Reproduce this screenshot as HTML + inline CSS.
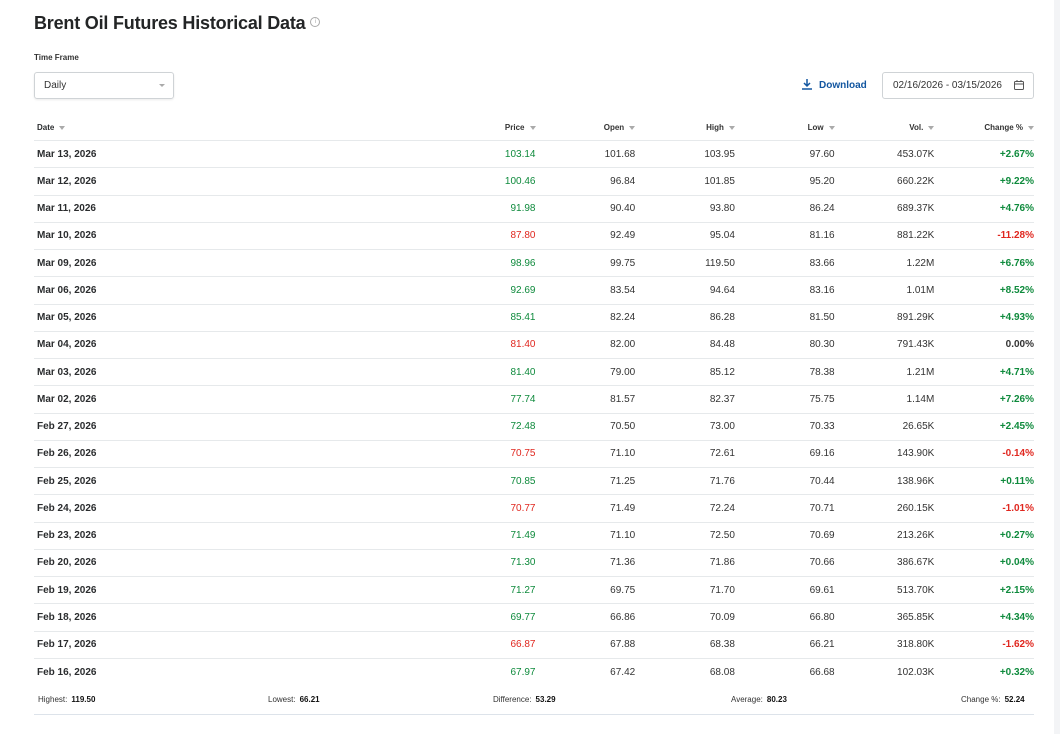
<!DOCTYPE html>
<html><head><meta charset="utf-8"><style>
body{margin:0;background:#fff;font-family:"Liberation Sans",Arial,sans-serif;color:#232526;width:1060px;height:734px;overflow:hidden;position:relative}
.abs{position:absolute}
h1{position:absolute;left:34px;top:13px;margin:0;font-size:18px;font-weight:bold;color:#232526;letter-spacing:-0.2px}
.info{display:inline-block;width:8px;height:8px;border:1px solid #aaa;border-radius:50%;font-size:6px;color:#aaa;text-align:center;line-height:8px;vertical-align:top;margin-left:5px;margin-top:4px;font-weight:normal}
.tf{left:34px;top:53px;font-size:8px;font-weight:bold;color:#333}
.sel{left:34px;top:72px;width:138px;height:25px;border:1px solid #cfd3d6;border-radius:3px;box-shadow:0 1px 2px rgba(0,0,0,.08)}
.sel span{position:absolute;left:9px;top:7px;font-size:10px;color:#333}
.sel i{position:absolute;right:8px;top:11px;border-left:3px solid transparent;border-right:3px solid transparent;border-top:3px solid #aaa}
.dl{left:801px;top:78px;font-size:10px;font-weight:bold;color:#1256a0}
.date{left:882px;top:72px;width:150px;height:25px;border:1px solid #cfd3d6;border-radius:3px;font-size:10px;color:#333}
.rows{position:absolute;left:34px;top:115px;width:1000px}
.r{display:flex;height:27.26px;align-items:center;border-bottom:1px solid #e6e9eb;box-sizing:border-box;font-size:10px;color:#333}
.r div{text-align:right}
.c0{width:200px;text-align:left!important;padding-left:3px;font-weight:bold;color:#2a2c2e}
.c1{width:300px}.c2,.c3,.c4,.c5{width:100px}.c6{width:100px;font-weight:bold}
.h{font-size:8px;font-weight:bold;height:26px}
.h div::after{content:"";display:inline-block;margin-left:5px;border-left:3px solid transparent;border-right:3px solid transparent;border-top:4px solid #aaa;vertical-align:middle}
.g{color:#0e8a3c!important}.rd{color:#e0271f!important}
.f{position:absolute;top:695px;font-size:8px;color:#333}
.f b{margin-left:4px;color:#111}
</style></head><body>
<h1>Brent Oil Futures Historical Data<span class="info">i</span></h1>
<div class="abs tf">Time Frame</div>
<div class="abs sel"><span>Daily</span><i></i></div>
<div class="abs dl"><svg width="12" height="12" viewBox="0 0 12 12" style="vertical-align:-2px;margin-right:6px"><path d="M6 1v7M3 5l3 3 3-3M1 11h10" stroke="#1256a0" stroke-width="1.5" fill="none"/></svg>Download</div>
<div class="abs date"><span style="position:absolute;left:10px;top:7px">02/16/2026 - 03/15/2026</span><svg class="abs" style="left:130px;top:6px" width="12" height="12" viewBox="0 0 12 12"><rect x="1.5" y="2.5" width="9" height="8" rx="1" stroke="#555" fill="none"/><path d="M1.5 5h9M4 1v2M8 1v2" stroke="#555"/></svg></div>
<div class="rows">
<div class="r h"><div class="c0">Date</div><div class="c1">Price</div><div class="c2">Open</div><div class="c3">High</div><div class="c4">Low</div><div class="c5">Vol.</div><div class="c6">Change %</div></div>
<div class="r"><div class="c0">Mar 13, 2026</div><div class="c1 g">103.14</div><div class="c2">101.68</div><div class="c3">103.95</div><div class="c4">97.60</div><div class="c5">453.07K</div><div class="c6 g">+2.67%</div></div>
<div class="r"><div class="c0">Mar 12, 2026</div><div class="c1 g">100.46</div><div class="c2">96.84</div><div class="c3">101.85</div><div class="c4">95.20</div><div class="c5">660.22K</div><div class="c6 g">+9.22%</div></div>
<div class="r"><div class="c0">Mar 11, 2026</div><div class="c1 g">91.98</div><div class="c2">90.40</div><div class="c3">93.80</div><div class="c4">86.24</div><div class="c5">689.37K</div><div class="c6 g">+4.76%</div></div>
<div class="r"><div class="c0">Mar 10, 2026</div><div class="c1 rd">87.80</div><div class="c2">92.49</div><div class="c3">95.04</div><div class="c4">81.16</div><div class="c5">881.22K</div><div class="c6 rd">-11.28%</div></div>
<div class="r"><div class="c0">Mar 09, 2026</div><div class="c1 g">98.96</div><div class="c2">99.75</div><div class="c3">119.50</div><div class="c4">83.66</div><div class="c5">1.22M</div><div class="c6 g">+6.76%</div></div>
<div class="r"><div class="c0">Mar 06, 2026</div><div class="c1 g">92.69</div><div class="c2">83.54</div><div class="c3">94.64</div><div class="c4">83.16</div><div class="c5">1.01M</div><div class="c6 g">+8.52%</div></div>
<div class="r"><div class="c0">Mar 05, 2026</div><div class="c1 g">85.41</div><div class="c2">82.24</div><div class="c3">86.28</div><div class="c4">81.50</div><div class="c5">891.29K</div><div class="c6 g">+4.93%</div></div>
<div class="r"><div class="c0">Mar 04, 2026</div><div class="c1 rd">81.40</div><div class="c2">82.00</div><div class="c3">84.48</div><div class="c4">80.30</div><div class="c5">791.43K</div><div class="c6">0.00%</div></div>
<div class="r"><div class="c0">Mar 03, 2026</div><div class="c1 g">81.40</div><div class="c2">79.00</div><div class="c3">85.12</div><div class="c4">78.38</div><div class="c5">1.21M</div><div class="c6 g">+4.71%</div></div>
<div class="r"><div class="c0">Mar 02, 2026</div><div class="c1 g">77.74</div><div class="c2">81.57</div><div class="c3">82.37</div><div class="c4">75.75</div><div class="c5">1.14M</div><div class="c6 g">+7.26%</div></div>
<div class="r"><div class="c0">Feb 27, 2026</div><div class="c1 g">72.48</div><div class="c2">70.50</div><div class="c3">73.00</div><div class="c4">70.33</div><div class="c5">26.65K</div><div class="c6 g">+2.45%</div></div>
<div class="r"><div class="c0">Feb 26, 2026</div><div class="c1 rd">70.75</div><div class="c2">71.10</div><div class="c3">72.61</div><div class="c4">69.16</div><div class="c5">143.90K</div><div class="c6 rd">-0.14%</div></div>
<div class="r"><div class="c0">Feb 25, 2026</div><div class="c1 g">70.85</div><div class="c2">71.25</div><div class="c3">71.76</div><div class="c4">70.44</div><div class="c5">138.96K</div><div class="c6 g">+0.11%</div></div>
<div class="r"><div class="c0">Feb 24, 2026</div><div class="c1 rd">70.77</div><div class="c2">71.49</div><div class="c3">72.24</div><div class="c4">70.71</div><div class="c5">260.15K</div><div class="c6 rd">-1.01%</div></div>
<div class="r"><div class="c0">Feb 23, 2026</div><div class="c1 g">71.49</div><div class="c2">71.10</div><div class="c3">72.50</div><div class="c4">70.69</div><div class="c5">213.26K</div><div class="c6 g">+0.27%</div></div>
<div class="r"><div class="c0">Feb 20, 2026</div><div class="c1 g">71.30</div><div class="c2">71.36</div><div class="c3">71.86</div><div class="c4">70.66</div><div class="c5">386.67K</div><div class="c6 g">+0.04%</div></div>
<div class="r"><div class="c0">Feb 19, 2026</div><div class="c1 g">71.27</div><div class="c2">69.75</div><div class="c3">71.70</div><div class="c4">69.61</div><div class="c5">513.70K</div><div class="c6 g">+2.15%</div></div>
<div class="r"><div class="c0">Feb 18, 2026</div><div class="c1 g">69.77</div><div class="c2">66.86</div><div class="c3">70.09</div><div class="c4">66.80</div><div class="c5">365.85K</div><div class="c6 g">+4.34%</div></div>
<div class="r"><div class="c0">Feb 17, 2026</div><div class="c1 rd">66.87</div><div class="c2">67.88</div><div class="c3">68.38</div><div class="c4">66.21</div><div class="c5">318.80K</div><div class="c6 rd">-1.62%</div></div>
<div class="r" style="border-bottom:none"><div class="c0">Feb 16, 2026</div><div class="c1 g">67.97</div><div class="c2">67.42</div><div class="c3">68.08</div><div class="c4">66.68</div><div class="c5">102.03K</div><div class="c6 g">+0.32%</div></div>
</div>
<div class="f" style="left:38px">Highest:<b>119.50</b></div>
<div class="f" style="left:268px">Lowest:<b>66.21</b></div>
<div class="f" style="left:493px">Difference:<b>53.29</b></div>
<div class="f" style="left:731px">Average:<b>80.23</b></div>
<div class="f" style="left:961px">Change %:<b>52.24</b></div>
<div class="abs" style="left:34px;top:714px;width:1000px;border-top:1px solid #dde3ea"></div>
<div class="abs" style="left:1054px;top:0;width:6px;height:734px;background:#f3f4f6"></div>
</body></html>
